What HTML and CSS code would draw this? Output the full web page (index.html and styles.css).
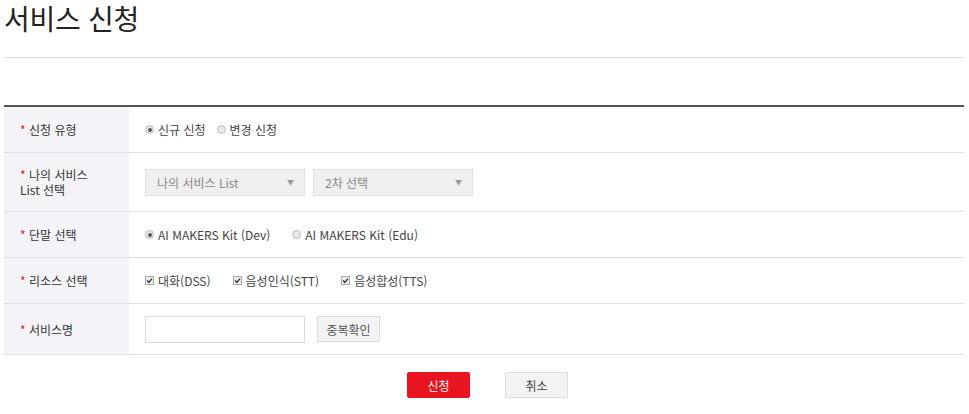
FILE: index.html
```html
<!DOCTYPE html>
<html lang="ko">
<head>
<meta charset="utf-8">
<title>서비스 신청</title>
<link rel="stylesheet" href="styles.css">
</head>
<body>
<div class="page">
  <h1 class="title">서비스 신청</h1>
  <div class="form">
    <div class="row r46">
      <div class="label"><span class="req">*</span> 신청 유형</div>
      <div class="field">
        <label class="opt"><span class="radio on"></span>신규 신청</label>
        <label class="opt"><span class="radio"></span>변경 신청</label>
      </div>
    </div>
    <div class="row r59">
      <div class="label two"><span><span class="req">*</span> 나의 서비스</span><span>List 선택</span></div>
      <div class="field">
        <div class="select"><span>나의 서비스 List</span><span class="arrow">▼</span></div>
        <div class="select"><span>2차 선택</span><span class="arrow">▼</span></div>
      </div>
    </div>
    <div class="row r46">
      <div class="label"><span class="req">*</span> 단말 선택</div>
      <div class="field wide">
        <label class="opt"><span class="radio on"></span>AI MAKERS Kit (Dev)</label>
        <label class="opt"><span class="radio"></span>AI MAKERS Kit (Edu)</label>
      </div>
    </div>
    <div class="row r46">
      <div class="label"><span class="req">*</span> 리소스 선택</div>
      <div class="field wide">
        <label class="opt"><span class="check"><svg viewBox="0 0 9 9" width="9" height="9"><path d="M2 4.6 L3.8 6.4 L7 2.6" fill="none" stroke="#333" stroke-width="1.4"/></svg></span>대화(DSS)</label>
        <label class="opt"><span class="check"><svg viewBox="0 0 9 9" width="9" height="9"><path d="M2 4.6 L3.8 6.4 L7 2.6" fill="none" stroke="#333" stroke-width="1.4"/></svg></span>음성인식(STT)</label>
        <label class="opt"><span class="check"><svg viewBox="0 0 9 9" width="9" height="9"><path d="M2 4.6 L3.8 6.4 L7 2.6" fill="none" stroke="#333" stroke-width="1.4"/></svg></span>음성합성(TTS)</label>
      </div>
    </div>
    <div class="row r51">
      <div class="label"><span class="req">*</span> 서비스명</div>
      <div class="field">
        <div class="input"></div>
        <button class="btn-sm">중복확인</button>
      </div>
    </div>
  </div>
  <div class="actions">
    <button class="btn primary">신청</button>
    <button class="btn">취소</button>
  </div>
</div>
</body>
</html>
```
FILE: styles.css
```css
* { box-sizing: border-box; }
html, body { margin: 0; padding: 0; background: #fff; }
body {
  font-family: "Noto Sans CJK KR", "Noto Sans", sans-serif;
  color: #333;
  font-size: 12px;
}
.page {
  width: 960px;
  margin-left: 4px;
}
.title {
  margin: 0;
  height: 58px;
  padding-top: 0;
  font-size: 28px;
  line-height: 36px;
  font-weight: 400;
  color: #222;
  border-bottom: 1px solid #e1e1e1;
  letter-spacing: -0.3px;
}
.form {
  margin-top: 47px;
  border-top: 2px solid #555;
}
.row {
  display: flex;
  border-bottom: 1px solid #e1e1e1;
}
.r46 { height: 46px; }
.r59 { height: 59px; }
.r51 { height: 51px; }
.label {
  width: 125px;
  background: #f4f4f8;
  display: flex;
  align-items: center;
  padding-left: 16px;
  color: #333;
  font-size: 12px;
  white-space: pre;
}
.label.two {
  flex-direction: column;
  align-items: flex-start;
  justify-content: center;
  line-height: 15px;
}
.req { color: #e8141f; }
.field {
  flex: 1;
  display: flex;
  align-items: center;
  padding-left: 16px;
  gap: 11px;
  color: #444;
}
.field.wide { gap: 22px; }
.opt {
  display: flex;
  align-items: center;
  gap: 4px;
  font-size: 12px;
}
.radio {
  width: 9px;
  height: 9px;
  border-radius: 50%;
  border: 1px solid #bbb;
  background: #e8e8e8;
  display: inline-block;
  position: relative;
}
.radio.on::after {
  content: "";
  position: absolute;
  left: 1.5px;
  top: 1.5px;
  width: 4px;
  height: 4px;
  border-radius: 50%;
  background: #555;
}
.check {
  width: 9px;
  height: 9px;
  border: 1px solid #aaa;
  background: #eee;
  display: inline-flex;
  align-items: center;
  justify-content: center;
  overflow: hidden;
}
.check svg { display: block; flex: none; }
.select {
  width: 160px;
  height: 27px;
  background: #efefef;
  border: 1px solid #e2e2e2;
  display: flex;
  align-items: center;
  justify-content: space-between;
  padding: 0 10px 0 11px;
  color: #888;
  font-size: 12px;
}
.field .select + .select { margin-left: -3px; }
.arrow { font-size: 7px; color: #999; }
.input {
  width: 160px;
  height: 27px;
  border: 1px solid #dcdcdc;
  background: #fff;
}
.btn-sm {
  margin-left: 1px;
  height: 26px;
  width: 63px;
  border: 1px solid #dcdcdc;
  background: #f3f3f3;
  color: #555;
  font-family: inherit;
  font-size: 12px;
  padding: 0;
}
.actions {
  display: flex;
  justify-content: center;
  gap: 35px;
  margin-top: 17px;
  padding-left: 7px;
}
.btn {
  width: 63px;
  height: 26px;
  border: 1px solid #dcdcdc;
  background: #f3f3f3;
  color: #444;
  font-family: inherit;
  font-size: 12px;
  border-radius: 2px;
  padding: 0;
}
.btn.primary {
  background: #e8141f;
  border-color: #e8141f;
  color: #fff;
}
```
